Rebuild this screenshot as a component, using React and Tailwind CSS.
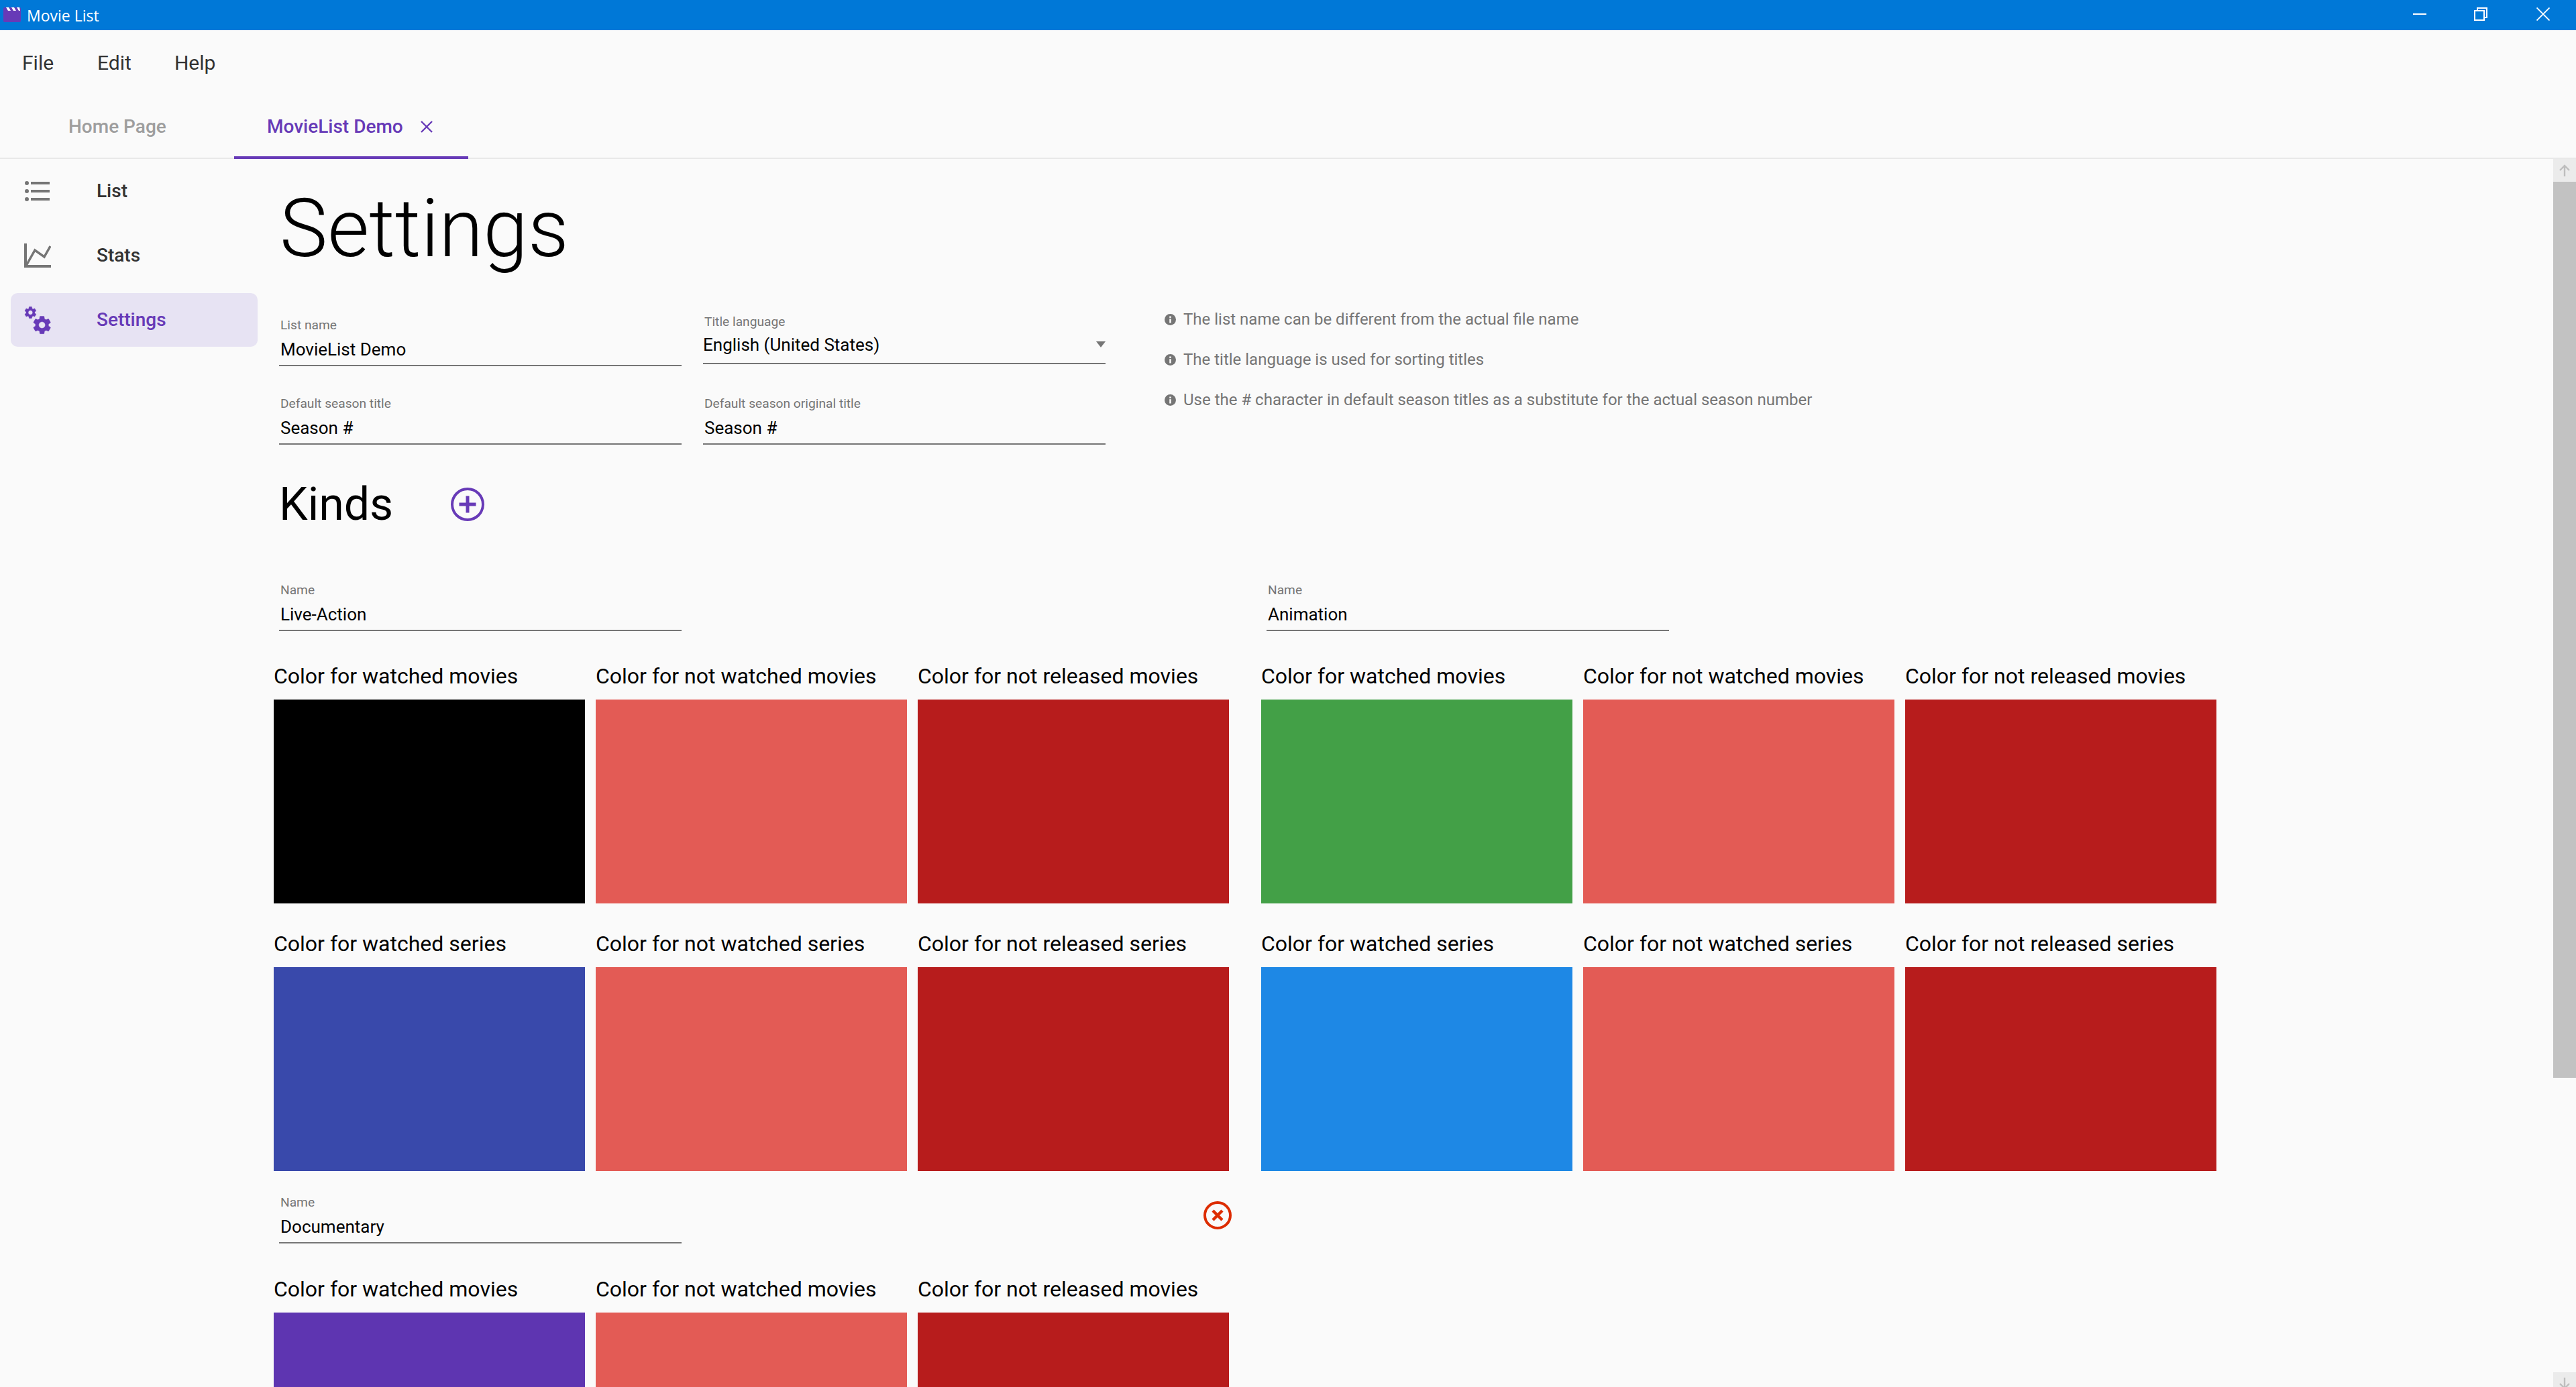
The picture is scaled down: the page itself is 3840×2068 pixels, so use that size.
const GEAR = "M19.14 12.94c.04-.3.06-.61.06-.94 0-.32-.02-.64-.07-.94l2.03-1.58c.18-.14.23-.41.12-.61l-1.92-3.32c-.12-.22-.37-.29-.59-.22l-2.39.96c-.5-.38-1.03-.7-1.62-.94l-.36-2.54c-.04-.24-.24-.41-.48-.41h-3.84c-.24 0-.43.17-.47.41l-.36 2.54c-.59.24-1.13.57-1.62.94l-2.39-.96c-.22-.08-.47 0-.59.22L2.74 8.87c-.12.21-.08.47.12.61l2.03 1.58c-.05.3-.09.63-.09.94s.02.64.07.94l-2.03 1.58c-.18.14-.23.41-.12.61l1.92 3.32c.12.22.37.29.59.22l2.39-.96c.5.38 1.03.7 1.62.94l.36 2.54c.05.24.24.41.48.41h3.84c.24 0 .44-.17.47-.41l.36-2.54c.59-.24 1.13-.56 1.62-.94l2.39.96c.22.08.47 0 .59-.22l1.92-3.32c.12-.22.07-.47-.12-.61l-2.01-1.58zM12 15.6c-1.98 0-3.6-1.62-3.6-3.6s1.62-3.6 3.6-3.6 3.6 1.62 3.6 3.6-1.62 3.6-3.6 3.6z";

function Field({ label, value, select = false }) {
  return (
    <div className={`relative w-[600px] ${select ? "mt-[-5px]" : ""}`}>
      <div className="h-[24px] pl-[2px] text-[19.2px] leading-[24px] text-[#757575]">{label}</div>
      <div className={`h-[30px] text-[26px] leading-[30px] text-black ${select ? "mt-[7px]" : "mt-[9px] pl-[2px]"}`}>{value}</div>
      <div className={`h-[2px] bg-[#757575] ${select ? "mt-[12px]" : "mt-[8px]"}`} />
      {select && <div className="absolute right-0 top-[41px] h-0 w-0 border-x-[7.5px] border-t-[9px] border-x-transparent border-t-[#757575]" />}
    </div>
  );
}

function Swatch({ label, color }) {
  return (
    <div className="w-[464px]">
      <div className="h-[36px] whitespace-nowrap text-[32px] leading-[36px] text-black">{label}</div>
      <div className={`mt-[17px] h-[304px] ${color}`} />
    </div>
  );
}

function Kind({ name, colors, rows = 2, action = null, topClass = "" }) {
  const [w, nw, nr, ws, nws, nrs] = colors;
  return (
    <div className={`w-[1424px] ${topClass}`}>
      <div className="flex items-start justify-between pl-[8px]">
        <Field label={name[0]} value={name[1]} />
        {action}
      </div>
      <div className={`flex gap-[16px] ${rows === 2 ? "mt-[49px]" : "mt-[50px]"}`}>
        <Swatch label="Color for watched movies" color={w} />
        <Swatch label="Color for not watched movies" color={nw} />
        <Swatch label="Color for not released movies" color={nr} />
      </div>
      {rows === 2 && (
        <div className="mt-[42px] flex gap-[16px]">
          <Swatch label="Color for watched series" color={ws} />
          <Swatch label="Color for not watched series" color={nws} />
          <Swatch label="Color for not released series" color={nrs} />
        </div>
      )}
    </div>
  );
}

function NavItem({ icon, label, active }) {
  return (
    <div className={`mx-[16px] mb-[16px] flex h-[80px] w-[368px] items-center rounded-[10px] ${active ? "bg-[#e7e3f3] text-[#673ab7]" : "text-[#333333]"}`}>
      <div className="flex w-[128px] shrink-0 pl-[20px]">{icon}</div>
      <div className="text-[28px] font-medium leading-[32px]">{label}</div>
    </div>
  );
}

function Info({ children }) {
  return (
    <div className="flex h-[60px] items-center text-[24px] text-[#757575]">
      <svg className="ml-[1736px] shrink-0" width="17" height="17" viewBox="0 0 17 17">
        <circle cx="8.5" cy="8.5" r="8.5" fill="#757575" />
        <rect x="7.25" y="3.5" width="2.5" height="2.4" fill="#fafafa" />
        <rect x="7.25" y="7.2" width="2.5" height="6.3" fill="#fafafa" />
      </svg>
      <div className="ml-[11px] whitespace-nowrap">{children}</div>
    </div>
  );
}

export default function App() {
  return (
    <div className="flex h-[2068px] w-[3840px] flex-col overflow-hidden bg-[#fafafa] font-['Roboto',sans-serif]">
      {/* title bar */}
      <div className="flex h-[45px] shrink-0 items-center bg-[#0078d7] text-white">
        <svg className="ml-[5px] mt-[-1px]" width="26" height="22" viewBox="0 0 26 22">
          <rect width="26" height="22" rx="2" fill="#673ab7" />
          <path d="M4 0h4l3 5H7zM12 0h4l3 5h-4zM20 0h4l1 5h-2z" fill="#fff" />
        </svg>
        <div className="ml-[9px] font-['Open_Sans',sans-serif] text-[23px] leading-[30px]">Movie List</div>
        <div className="ml-auto flex items-center pb-[3px]">
          <div className="h-[2px] w-[20px] bg-white" />
          <svg className="ml-[71px]" width="20" height="20" viewBox="0 0 20 20" fill="none" stroke="#fff" strokeWidth="2">
            <rect x="1" y="5" width="14" height="14" />
            <path d="M5 5V1h14v14h-4" />
          </svg>
          <svg className="ml-[73px] mr-[39px]" width="20" height="20" viewBox="0 0 20 20" fill="none" stroke="#fff" strokeWidth="1.8">
            <path d="M0.5 0.5l19 19M19.5 0.5l-19 19" />
          </svg>
        </div>
      </div>

      {/* menu */}
      <div className="flex h-[96px] shrink-0 items-start pt-[31px] text-[30px] leading-[36px] text-[#333333]">
        <div className="ml-[33px]">File</div>
        <div className="ml-[65px]">Edit</div>
        <div className="ml-[64px]">Help</div>
      </div>

      {/* tabs */}
      <div className="flex h-[96px] shrink-0 border-b-2 border-[#e8e8e8] text-[28px] font-medium">
        <div className="flex h-[96px] w-[349px] items-center pl-[102px] text-[#9e9e9e]">Home Page</div>
        <div className="flex h-[96px] w-[349px] items-center border-b-[4px] border-[#673ab7] pl-[49px] pt-[4px] text-[#673ab7]">
          MovieList Demo
          <svg className="ml-[26px]" width="18" height="18" viewBox="0 0 18 18" fill="none" stroke="#673ab7" strokeWidth="2.4">
            <path d="M1 1l16 16M17 1L1 17" />
          </svg>
        </div>
      </div>

      {/* body */}
      <div className="flex min-h-0 flex-1">
        <div className="w-[408px] shrink-0 pt-[8px]">
          <NavItem
            label="List"
            icon={
              <svg width="40" height="32" viewBox="0 0 40 32" fill="#757575">
                <circle cx="4" cy="4" r="3" /><circle cx="4" cy="16" r="3" /><circle cx="4" cy="28" r="3" />
                <rect x="10" y="2" width="28" height="4" /><rect x="10" y="14" width="28" height="4" /><rect x="10" y="26" width="28" height="4" />
              </svg>
            }
          />
          <NavItem
            label="Stats"
            icon={
              <svg width="40" height="36" viewBox="0 0 40 36" fill="none" stroke="#757575">
                <path d="M2 0v34h38" strokeWidth="4" />
                <path d="M3 33L16 10l14 10L39 4" strokeWidth="3.5" />
              </svg>
            }
          />
          <NavItem
            label="Settings"
            active
            icon={
              <svg width="42" height="44" viewBox="0 0 42 44" fill="#673ab7" stroke="#673ab7" strokeWidth="0.3">
                <g transform="translate(-1.4 0.2) scale(0.9)"><path d={GEAR} /></g>
                <g transform="translate(10.3 13.3) scale(1.36)"><path d={GEAR} /></g>
              </svg>
            }
          />
        </div>

        <div className="min-w-0 flex-1">
          <div className="ml-[9px] mt-[52px] h-[104px] text-[120px] font-light leading-[104px] text-black">Settings</div>
          <div className="relative mt-[80px]">
            <div className="flex gap-[32px] pl-[8px]">
              <Field label="List name" value="MovieList Demo" />
              <Field label="Title language" value="English (United States)" select />
            </div>
            <div className="mt-[44px] flex gap-[32px] pl-[8px]">
              <Field label="Default season title" value="Season #" />
              <Field label="Default season original title" value="Season #" />
            </div>
            <div className="absolute left-[-408px] top-[-27px]">
              <Info>The list name can be different from the actual file name</Info>
              <Info>The title language is used for sorting titles</Info>
              <Info>Use the # character in default season titles as a substitute for the actual season number</Info>
            </div>
          </div>

          <div className="mt-[49px] flex h-[80px] items-center pl-[8px]">
            <div className="text-[68px] leading-[80px] text-black">Kinds</div>
            <svg className="ml-[86px]" width="50" height="50" viewBox="0 0 50 50" fill="none" stroke="#673ab7">
              <circle cx="25" cy="25" r="23" strokeWidth="4" />
              <path d="M25 12.5v25M12.5 25h25" strokeWidth="5" />
            </svg>
          </div>

          <div className="mt-[76px] flex gap-[48px]">
            <div>
              <Kind name={["Name", "Live-Action"]} colors={["bg-black", "bg-[#e35b55]", "bg-[#b71c1c]", "bg-[#3949ab]", "bg-[#e35b55]", "bg-[#b71c1c]"]} />
              <Kind
                topClass="mt-[35px]"
                rows={1}
                name={["Name", "Documentary"]}
                colors={["bg-[#5e35b1]", "bg-[#e35b55]", "bg-[#b71c1c]"]}
                action={
                  <svg className="mr-[-4px] mt-[10px]" width="42" height="42" viewBox="0 0 42 42" fill="none" stroke="#dd2c00">
                    <circle cx="21" cy="21" r="19" strokeWidth="4" />
                    <path d="M14 14l14 14M28 14L14 28" strokeWidth="4.5" />
                  </svg>
                }
              />
            </div>
            <div>
              <Kind name={["Name", "Animation"]} colors={["bg-[#43a047]", "bg-[#e35b55]", "bg-[#b71c1c]", "bg-[#1e88e5]", "bg-[#e35b55]", "bg-[#b71c1c]"]} />
            </div>
          </div>
        </div>

        {/* scrollbar */}
        <div className="flex w-[34px] shrink-0 flex-col">
          <div className="flex h-[34px] shrink-0 items-center justify-center bg-[#ebebeb]">
            <svg width="16" height="18" viewBox="0 0 16 18" fill="none" stroke="#bdbdbd" strokeWidth="2.4"><path d="M8 18V2M1 9l7-7 7 7" /></svg>
          </div>
          <div className="h-[1336px] shrink-0 bg-[#c2c2c2]" />
          <div className="h-[439px] shrink-0" />
          <div className="flex h-[34px] shrink-0 items-center justify-center bg-[#ebebeb]">
            <svg width="16" height="18" viewBox="0 0 16 18" fill="none" stroke="#bdbdbd" strokeWidth="2.4"><path d="M8 0v16M1 9l7 7 7-7" /></svg>
          </div>
        </div>
      </div>
    </div>
  );
}
